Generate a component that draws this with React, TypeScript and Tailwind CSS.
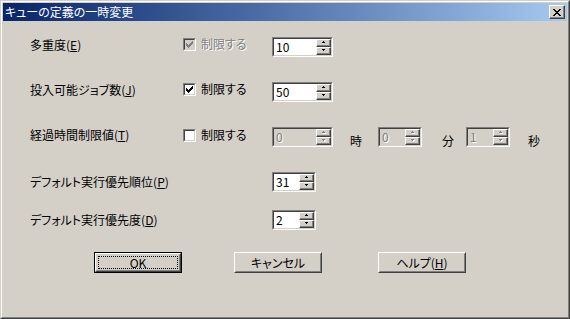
import type { ReactNode } from "react";

const FONT =
  "font-['Noto_Sans_CJK_JP','Liberation_Sans',sans-serif] [font-feature-settings:'palt'] text-[12px] leading-[14px]";

const CHECK_PATH =
  "M0 2h1v3H0z M1 3h1v3H1z M2 4h1v3H2z M3 3h1v3H3z M4 2h1v3H4z M5 1h1v3H5z M6 0h1v3H6z";

const CLOSE_PATH =
  "M0 0h2v1H0z M6 0h2v1H6z M1 1h2v1H1z M5 1h2v1H5z M2 2h4v1H2z M3 3h2v1H3z M2 4h4v1H2z M1 5h2v1H1z M5 5h2v1H5z M0 6h2v1H0z M6 6h2v1H6z";

function Sunken({ className = "", children }: { className?: string; children: ReactNode }) {
  return (
    <div
      className={`flex border border-t-[#808080] border-l-[#808080] border-r-white border-b-white ${className}`}
    >
      <div className="flex flex-1 border border-t-[#404040] border-l-[#404040] border-r-[#d4d0c8] border-b-[#d4d0c8]">
        {children}
      </div>
    </div>
  );
}

function Checkbox({ checked, disabled }: { checked?: boolean; disabled?: boolean }) {
  return (
    <Sunken className="size-[13px] shrink-0">
      <div
        className={`flex flex-1 items-center justify-center ${disabled ? "bg-[#d4d0c8]" : "bg-white"}`}
      >
        {checked && (
          <svg width="7" height="7" viewBox="0 0 7 7" shapeRendering="crispEdges">
            <path d={CHECK_PATH} fill={disabled ? "#808080" : "#000"} />
          </svg>
        )}
      </div>
    </Sunken>
  );
}

function SpinButton({ up, disabled }: { up?: boolean; disabled?: boolean }) {
  const arrow = up ? "M1 0h1v1H1z M0 1h3v1H0z" : "M0 0h3v1H0z M1 1h1v1H1z";
  return (
    <div className="flex h-[8px] items-center justify-center border border-t-white border-l-white border-r-[#404040] border-b-[#404040] bg-[#d4d0c8] shadow-[inset_-1px_-1px_#808080]">
      <svg width="4" height="3" viewBox="0 0 4 3" shapeRendering="crispEdges" className="-mt-[1px]">
        {disabled && <path d={arrow} fill="#fff" transform="translate(1 1)" />}
        <path d={arrow} fill={disabled ? "#808080" : "#000"} />
      </svg>
    </div>
  );
}

function SpinBox({ value, width, disabled }: { value: string; width: string; disabled?: boolean }) {
  return (
    <Sunken className={`h-[20px] shrink-0 ${width}`}>
      <div
        className={`flex-1 pl-[2px] pt-[1px] ${
          disabled ? "bg-[#d4d0c8] text-[#808080] [text-shadow:1px_1px_0_#fff]" : "bg-white text-black"
        }`}
      >
        {value}
      </div>
      <div className="flex w-[15px] flex-col bg-[#d4d0c8]">
        <SpinButton up disabled={disabled} />
        <SpinButton disabled={disabled} />
      </div>
    </Sunken>
  );
}

function LimitCheck({ checked, disabled }: { checked?: boolean; disabled?: boolean }) {
  return (
    <div className="flex w-[89px] shrink-0 items-center">
      <Checkbox checked={checked} disabled={disabled} />
      <span
        className={`ml-[5px] ${disabled ? "text-[#808080] [text-shadow:1px_1px_0_#fff]" : "text-black"}`}
      >
        制限する
      </span>
    </div>
  );
}

function PushButton({ children, isDefault }: { children: ReactNode; isDefault?: boolean }) {
  return (
    <div className={`flex h-[21px] w-[88px] ${isDefault ? "border border-black" : ""}`}>
      <div className="flex flex-1 border border-t-white border-l-white border-r-[#404040] border-b-[#404040]">
        <div className="flex flex-1 border border-t-[#d4d0c8] border-l-[#d4d0c8] border-r-[#808080] border-b-[#808080]">
          <div
            className={`m-px flex flex-1 items-center justify-center border border-dotted ${
              isDefault ? "border-black" : "border-transparent"
            }`}
          >
            {children}
          </div>
        </div>
      </div>
    </div>
  );
}

export default function App() {
  return (
    <div className={`h-[319px] w-[570px] bg-[#d4d0c8] text-black ${FONT}`}>
      <div className="flex h-full border border-t-[#d4d0c8] border-l-[#d4d0c8] border-r-[#404040] border-b-[#404040]">
        <div className="flex flex-1 flex-col border border-t-white border-l-white border-r-[#808080] border-b-[#808080] p-px">
          {/* title bar */}
          <div className="flex h-[18px] items-center justify-between bg-linear-to-r from-[#0a246a] to-[#a6caf0] pl-[2px] pr-[2px]">
            <span className="text-white">キューの定義の一時変更</span>
            <div className="flex h-[14px] w-[16px] border border-t-white border-l-white border-r-[#404040] border-b-[#404040] bg-[#d4d0c8] shadow-[inset_-1px_-1px_#808080]">
              <div className="flex flex-1 items-center justify-center pr-px">
                <svg width="8" height="7" viewBox="0 0 8 7" shapeRendering="crispEdges">
                  <path d={CLOSE_PATH} fill="#000" />
                </svg>
              </div>
            </div>
          </div>

          {/* client */}
          <div className="flex flex-col pl-[27px]">
            <div className="mt-[16px] flex h-[20px] items-start">
              <div className="flex w-[153px] shrink-0 items-center pt-px">
                <span>
                  多重度(<span className="underline underline-offset-1">E</span>)
                </span>
              </div>
              <LimitCheck checked disabled />
              <SpinBox value="10" width="w-[61px]" />
            </div>

            <div className="mt-[25px] flex h-[20px] items-start">
              <div className="flex w-[153px] shrink-0 items-center pt-px">
                <span>
                  投入可能ジョブ数(<span className="underline underline-offset-1">J</span>)
                </span>
              </div>
              <LimitCheck checked />
              <SpinBox value="50" width="w-[61px]" />
            </div>

            <div className="mt-[25px] flex h-[20px] items-start">
              <div className="flex w-[153px] shrink-0 items-center pt-px">
                <span>
                  経過時間制限値(<span className="underline underline-offset-1">T</span>)
                </span>
              </div>
              <div className="pt-px">
                <LimitCheck />
              </div>
              <SpinBox value="0" width="w-[61px]" disabled />
              <span className="ml-[17px] pt-[7px]">時</span>
              <div className="ml-[16px]">
                <SpinBox value="0" width="w-[44px]" disabled />
              </div>
              <span className="ml-[20px] pt-[7px]">分</span>
              <div className="ml-[12px]">
                <SpinBox value="1" width="w-[44px]" disabled />
              </div>
              <span className="ml-[18px] pt-[7px]">秒</span>
            </div>

            <div className="mt-[25px] flex h-[20px] items-center">
              <span className="w-[242px] shrink-0">
                デフォルト実行優先順位(<span className="underline underline-offset-1">P</span>)
              </span>
              <SpinBox value="31" width="w-[44px]" />
            </div>

            <div className="mt-[18px] flex h-[20px] items-center">
              <span className="w-[242px] shrink-0">
                デフォルト実行優先度(<span className="underline underline-offset-1">D</span>)
              </span>
              <SpinBox value="2" width="w-[44px]" />
            </div>
          </div>

          {/* buttons */}
          <div className="mt-[22px] flex pl-[91px]">
            <PushButton isDefault>OK</PushButton>
            <div className="ml-[52px]">
              <PushButton>キャンセル</PushButton>
            </div>
            <div className="ml-[56px]">
              <PushButton>
                <span>
                  ヘルプ(<span className="underline underline-offset-1">H</span>)
                </span>
              </PushButton>
            </div>
          </div>
        </div>
      </div>
    </div>
  );
}
